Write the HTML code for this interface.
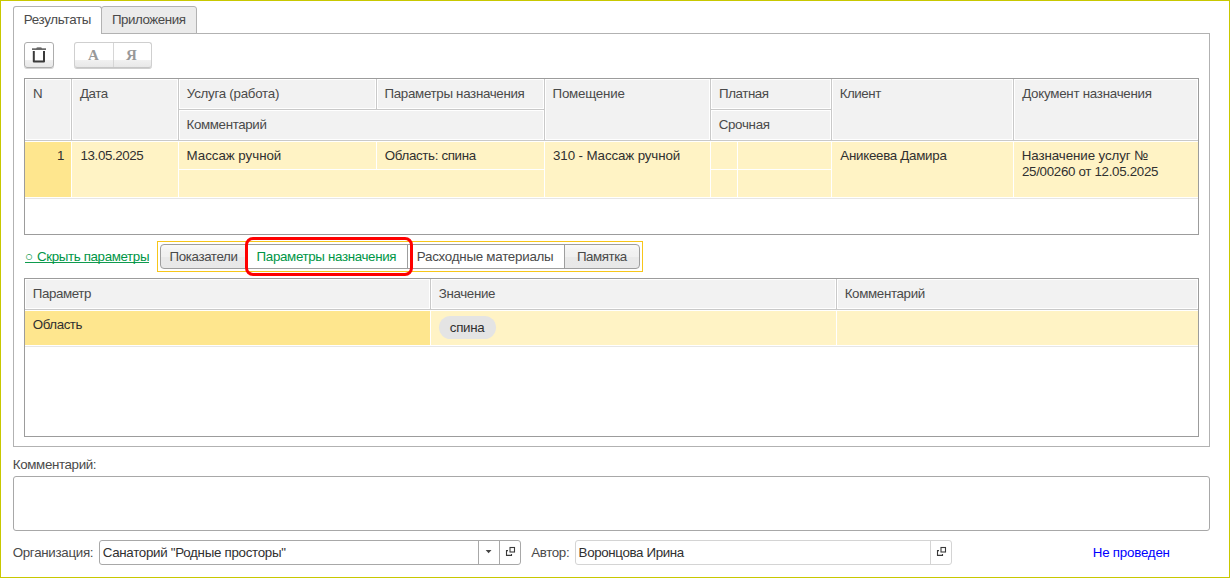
<!DOCTYPE html>
<html lang="ru">
<head>
<meta charset="utf-8">
<title>Результаты</title>
<style>
html,body{margin:0;padding:0;}
body{width:1230px;height:578px;position:relative;overflow:hidden;background:#fff;
 font-family:"Liberation Sans",sans-serif;font-size:13.33px;color:#3c3c3c;}
#frame{position:absolute;left:0;top:0;width:1228px;height:576px;border:1px solid #c8c800;pointer-events:none;z-index:50;}
.abs{position:absolute;box-sizing:border-box;}
.t{position:absolute;white-space:nowrap;line-height:16px;}
/* tabs */
#panel{left:13px;top:33px;width:1197px;height:414px;border:1px solid #b2b2b2;}
#tab1{left:13px;top:6px;width:89px;height:28px;border:1px solid #b2b2b2;border-bottom:none;border-radius:3px 3px 0 0;background:#fff;}
#tab2{left:101px;top:6px;width:96px;height:28px;border:1px solid #b2b2b2;border-radius:3px 3px 0 0;background:#ebebeb;}
/* buttons */
.btn{border:1px solid #adadad;border-radius:3px;background:linear-gradient(#fff 0,#fff 71%,#f1f1f1 71%,#e8e8e8 100%);box-shadow:0 1px 0 #d4d4d4;}
/* grid */
.grid{border:1px solid #9c9c9c;background:#fff;}
.hb{position:absolute;left:0;top:0;background:#c9c9c9;}
.hc{position:absolute;box-sizing:border-box;background:#f2f2f2;border:1px solid #fff;}
.dc{position:absolute;box-sizing:border-box;background:#fff3c5;}
.dc.sel{background:#fee68e;}
.ln{position:absolute;left:0;height:1px;background:#e6e6e6;}
.inp{border:1px solid #a8a8a8;border-radius:3px;background:#fff;}
</style>
</head>
<body>
<div id="frame"></div>

<!-- tab panel -->
<div class="abs" id="panel"></div>
<div class="abs" id="tab2"></div>
<div class="abs" id="tab1"></div>
<div class="t" style="left:23.71px;top:12px;letter-spacing:-0.280px;color:#4a4a4a;">Результаты</div>
<div class="t" style="left:111.92px;top:12px;letter-spacing:-0.439px;color:#4a4a4a;">Приложения</div>

<!-- toolbar -->
<div class="abs btn" style="left:24px;top:42px;width:30px;height:26px;"></div>
<svg class="abs" style="left:30px;top:45px;" width="18" height="20" viewBox="0 0 18 20">
 <path d="M6.2 3.4 Q6.4 2.4 7.4 2.4 H10.8 Q11.8 2.4 12 3.4 Z" fill="#3a3a3a"/>
 <path d="M2 4.1h14" stroke="#3a3a3a" stroke-width="1.3" fill="none"/>
 <path d="M3.8 6.1v10.4h10.2V6.1" stroke="#3a3a3a" stroke-width="2" fill="none" stroke-linejoin="round"/>
</svg>
<div class="abs btn" style="left:74px;top:42px;width:78px;height:26px;border-color:#cfcfcf;border-bottom-color:#c6c6c6;box-shadow:0 1px 0 #cfcfcf;"></div>
<div class="abs" style="left:113px;top:43px;width:1px;height:24px;background:#d6d6d6;"></div>
<div class="t" style="left:74px;top:47px;width:39px;text-align:center;font-family:'Liberation Serif',serif;font-weight:bold;color:#999;font-size:15px;line-height:16px;">А</div>
<div class="t" style="left:112px;top:47px;width:39px;text-align:center;font-family:'Liberation Serif',serif;font-weight:bold;color:#999;font-size:15px;line-height:16px;">Я</div>

<!-- upper grid -->
<div class="abs grid" id="g1" style="left:24px;top:78px;width:1175px;height:157px;">
 <div class="hb" style="width:1173px;height:62px;"></div>
 <div class="hc" style="left:0;top:0;width:46px;height:61px;"></div>
 <div class="hc" style="left:47px;top:0;width:106px;height:61px;"></div>
 <div class="hc" style="left:154px;top:0;width:197px;height:30px;"></div>
 <div class="hc" style="left:352px;top:0;width:167px;height:30px;"></div>
 <div class="hc" style="left:154px;top:31px;width:365px;height:30px;"></div>
 <div class="hc" style="left:520px;top:0;width:165px;height:61px;"></div>
 <div class="hc" style="left:686px;top:0;width:120px;height:30px;"></div>
 <div class="hc" style="left:686px;top:31px;width:120px;height:30px;"></div>
 <div class="hc" style="left:807px;top:0;width:181px;height:61px;"></div>
 <div class="hc" style="left:989px;top:0;width:184px;height:61px;"></div>
 <div class="dc sel" style="left:0;top:63px;width:46px;height:55px;"></div>
 <div class="dc" style="left:47px;top:63px;width:106px;height:55px;"></div>
 <div class="dc" style="left:154px;top:63px;width:197px;height:27px;"></div>
 <div class="dc" style="left:352px;top:63px;width:167px;height:27px;"></div>
 <div class="dc" style="left:154px;top:91px;width:365px;height:27px;"></div>
 <div class="dc" style="left:520px;top:63px;width:165px;height:55px;"></div>
 <div class="dc" style="left:686px;top:63px;width:26px;height:27px;"></div>
 <div class="dc" style="left:713px;top:63px;width:93px;height:27px;"></div>
 <div class="dc" style="left:686px;top:91px;width:26px;height:27px;"></div>
 <div class="dc" style="left:713px;top:91px;width:93px;height:27px;"></div>
 <div class="dc" style="left:807px;top:63px;width:181px;height:55px;"></div>
 <div class="dc" style="left:989px;top:63px;width:184px;height:55px;"></div>
 <div class="ln" style="top:119px;width:1173px;"></div>
</div>
<div class="t" style="left:33.01px;top:86px;letter-spacing:0.000px;color:#4a4a4a;">N</div>
<div class="t" style="left:79.91px;top:86px;letter-spacing:-0.450px;color:#4a4a4a;">Дата</div>
<div class="t" style="left:186.83px;top:86px;letter-spacing:-0.260px;color:#4a4a4a;">Услуга (работа)</div>
<div class="t" style="left:186.61px;top:117px;letter-spacing:-0.373px;color:#4a4a4a;">Комментарий</div>
<div class="t" style="left:384.52px;top:86px;letter-spacing:-0.317px;color:#4a4a4a;">Параметры назначения</div>
<div class="t" style="left:552.52px;top:86px;letter-spacing:-0.213px;color:#4a4a4a;">Помещение</div>
<div class="t" style="left:719.12px;top:86px;letter-spacing:-0.450px;color:#4a4a4a;">Платная</div>
<div class="t" style="left:718.67px;top:117px;letter-spacing:-0.285px;color:#4a4a4a;">Срочная</div>
<div class="t" style="left:839.71px;top:86px;letter-spacing:-0.450px;color:#4a4a4a;">Клиент</div>
<div class="t" style="left:1022.21px;top:86px;letter-spacing:-0.257px;color:#4a4a4a;">Документ назначения</div>
<div class="t" style="left:56.95px;top:148px;letter-spacing:0.000px;color:#303030;">1</div>
<div class="t" style="left:80.55px;top:148px;letter-spacing:-0.389px;color:#303030;">13.05.2025</div>
<div class="t" style="left:186.61px;top:148px;letter-spacing:-0.037px;color:#303030;">Массаж ручной</div>
<div class="t" style="left:384.76px;top:148px;letter-spacing:-0.342px;color:#303030;">Область: спина</div>
<div class="t" style="left:553.08px;top:148px;letter-spacing:-0.117px;color:#303030;">310 - Массаж ручной</div>
<div class="t" style="left:840.37px;top:148px;letter-spacing:-0.284px;color:#303030;">Аникеева Дамира</div>
<div class="t" style="left:1021.81px;top:148px;letter-spacing:-0.088px;color:#303030;">Назначение услуг №</div>
<div class="t" style="left:1021.97px;top:164px;letter-spacing:-0.309px;color:#303030;">25/00260 от 12.05.2025</div>

<!-- middle bar -->
<div class="t" style="left:25px;top:249px;color:#009646;">○</div>
<div class="abs" style="left:25px;top:262px;width:124px;height:1px;background:#0f9b4e;"></div>
<div class="t" style="left:36.97px;top:249px;letter-spacing:-0.358px;color:#009646;">Скрыть параметры</div>
<div class="abs" style="left:157px;top:241px;width:486px;height:31px;border:1px solid #f7c61a;"></div>
<div class="abs" id="seg" style="left:160px;top:244px;width:480px;height:25px;border:1px solid #9e9e9e;border-radius:4px;background:linear-gradient(#fafafa 0,#f1f1f1 30%,#f0f0f0 52%,#e9e9e9 52%,#e8e8e8 100%);"></div>
<div class="abs" style="left:247px;top:245px;width:318px;height:23px;background:#fff;border-left:1px solid #9e9e9e;border-right:1px solid #9e9e9e;"></div>
<div class="abs" style="left:407px;top:245px;width:1px;height:23px;background:#9e9e9e;"></div>
<div class="t" style="left:169.62px;top:249px;letter-spacing:-0.391px;color:#4a4a4a;">Показатели</div>
<div class="t" style="left:256.62px;top:249px;letter-spacing:-0.338px;color:#009646;">Параметры назначения</div>
<div class="t" style="left:416.81px;top:249px;letter-spacing:-0.244px;color:#4a4a4a;">Расходные материалы</div>
<div class="t" style="left:576.92px;top:249px;letter-spacing:-0.450px;color:#4a4a4a;">Памятка</div>
<div class="abs" style="left:245px;top:237px;width:168px;height:39px;border:3px solid #ff0000;border-radius:8px;"></div>

<!-- lower grid -->
<div class="abs grid" id="g2" style="left:24px;top:278px;width:1175px;height:159px;">
 <div class="hb" style="width:1173px;height:31px;"></div>
 <div class="hc" style="left:0;top:0;width:405px;height:30px;"></div>
 <div class="hc" style="left:406px;top:0;width:405px;height:30px;"></div>
 <div class="hc" style="left:812px;top:0;width:361px;height:30px;"></div>
 <div class="dc sel" style="left:0;top:32px;width:405px;height:34px;"></div>
 <div class="dc" style="left:406px;top:32px;width:405px;height:34px;"></div>
 <div class="dc" style="left:812px;top:32px;width:361px;height:34px;"></div>
 <div class="ln" style="top:67px;width:1173px;"></div>
 <div class="abs" style="left:414px;top:37px;width:57px;height:23px;border-radius:12px;background:#e4e4e4;"></div>
</div>
<div class="t" style="left:32.82px;top:286px;letter-spacing:-0.400px;color:#4a4a4a;">Параметр</div>
<div class="t" style="left:438.78px;top:286px;letter-spacing:-0.355px;color:#4a4a4a;">Значение</div>
<div class="t" style="left:844.71px;top:286px;letter-spacing:-0.343px;color:#4a4a4a;">Комментарий</div>
<div class="t" style="left:32.86px;top:317px;letter-spacing:-0.450px;color:#303030;">Область</div>
<div class="t" style="left:449.81px;top:320px;letter-spacing:-0.309px;color:#303030;">спина</div>

<!-- bottom -->
<div class="t" style="left:12.81px;top:457px;letter-spacing:-0.353px;color:#4a4a4a;">Комментарий:</div>
<div class="abs inp" style="left:13px;top:476px;width:1197px;height:55px;"></div>
<div class="t" style="left:12.66px;top:545px;letter-spacing:-0.293px;color:#4a4a4a;">Организация:</div>
<div class="abs inp" style="left:99px;top:540px;width:422px;height:25px;"></div>
<div class="abs" style="left:478px;top:541px;width:1px;height:23px;background:#a8a8a8;"></div>
<div class="abs" style="left:499px;top:541px;width:1px;height:23px;background:#a8a8a8;"></div>
<div class="t" style="left:102.67px;top:545px;letter-spacing:-0.287px;color:#303030;">Санаторий &quot;Родные просторы&quot;</div>
<svg class="abs" style="left:484px;top:548px;" width="10" height="7" viewBox="0 0 10 7"><path d="M1.7 1.9h5.8l-2.9 3.3z" fill="#444"/></svg>
<svg class="abs" style="left:504px;top:545px;" width="14" height="14" viewBox="0 0 14 14"><rect x="6" y="2.5" width="4.5" height="4.5" fill="none" stroke="#3a3a3a" stroke-width="1.1"/><path d="M4 5.6H2.5V10.4H7.5V9" fill="none" stroke="#3a3a3a" stroke-width="1.1"/></svg>
<div class="t" style="left:531.17px;top:545px;letter-spacing:-0.347px;color:#4a4a4a;">Автор:</div>
<div class="abs inp" style="left:575px;top:540px;width:377px;height:25px;border-color:#d4d4d4;"></div>
<div class="abs" style="left:930px;top:541px;width:1px;height:23px;background:#d4d4d4;"></div>
<div class="t" style="left:578.61px;top:545px;letter-spacing:-0.358px;color:#303030;">Воронцова Ирина</div>
<svg class="abs" style="left:535px;top:545px;margin-left:400px;" width="14" height="14" viewBox="0 0 14 14"><rect x="6" y="2.5" width="4.5" height="4.5" fill="none" stroke="#3a3a3a" stroke-width="1.1"/><path d="M4 5.6H2.5V10.4H7.5V9" fill="none" stroke="#3a3a3a" stroke-width="1.1"/></svg>
<div class="t" style="left:1092.81px;top:545px;letter-spacing:-0.222px;color:#0000ff;">Не проведен</div>
</body>
</html>
